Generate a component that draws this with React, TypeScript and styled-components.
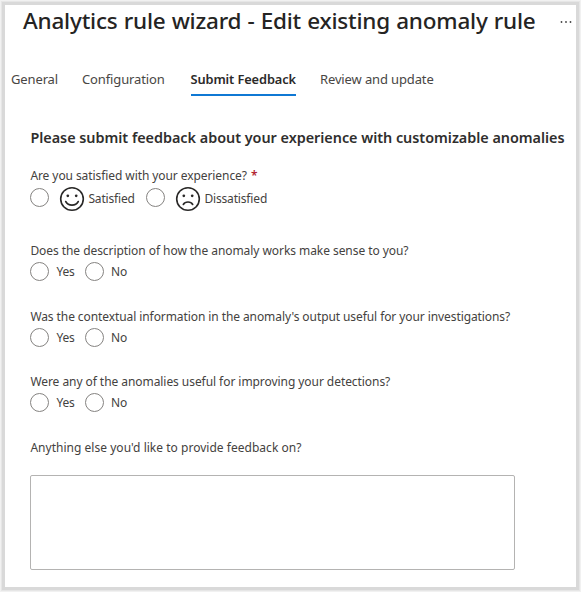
import React from "react";
import styled, { createGlobalStyle } from "styled-components";

const GlobalStyle = createGlobalStyle`
  * { box-sizing: border-box; }
  body { margin: 0; background: #f1f1f1; }
`;

const Frame = styled.main`
  width: 577px;
  height: 588px;
  margin: 2px;
  border: 3px solid #d9d9d9;
  outline: 1px solid #e6e6e6;
  background: #fff;
  color: #444240;
  font: 400 12px/18px "Noto Sans", "Open Sans", sans-serif;
  white-space: nowrap;
  overflow: hidden;
`;

const Header = styled.header`
  display: flex;
  justify-content: space-between;
  height: 32px;
  padding: 0 4px 0 18px;
`;

const Title = styled.h1`
  margin: 0;
  color: #252423;
  font-size: 22.5px;
  font-weight: 500;
  line-height: 32px;
  letter-spacing: -0.2px;
  word-spacing: 0.5px;
`;

const MoreIcon = styled.svg`
  width: 12px;
  height: 4px;
  margin-top: 15px;
  fill: #444;
`;

const Tabs = styled.nav`
  display: flex;
  gap: 25px;
  margin: 29px 0 0 6px;
`;

const Tab = styled.button<{ $active?: boolean; $width: number }>`
  width: ${({ $width }) => $width}px;
  height: 30px;
  padding: 3px 0 4px;
  border: 0;
  border-bottom: 2px solid ${({ $active }) => ($active ? "#0f78d4" : "transparent")};
  background: none;
  color: ${({ $active }) => ($active ? "#2b2a29" : "#484644")};
  font: inherit;
  font-size: ${({ $active }) => ($active ? 12.8 : 13)}px;
  font-weight: ${({ $active }) => ($active ? 600 : 400)};
  line-height: 21px;
  letter-spacing: ${({ $active }) => ($active ? "-0.1px" : "-0.13px")};
  text-align: left;

  &:last-child { margin-left: -1px; }
`;

const Form = styled.form`
  display: flex;
  flex-direction: column;
  padding: 30px 0 0 25.4px;
`;

const Heading = styled.h2`
  margin: 0 0 17px;
  color: #2f2e2d;
  font-size: 14.4px;
  font-weight: 600;
  line-height: 24px;
  letter-spacing: -0.02px;
`;

const Question = styled.section<{ $height: number }>`
  height: ${({ $height }) => $height}px;
`;

const Prompt = styled.div<{ $spacing?: number }>`
  height: 18px;
  letter-spacing: ${({ $spacing = -0.06 }) => $spacing}px;
`;

const Required = styled.span`
  margin-left: 1px;
  color: #b32632;
  font-size: 12px;
  font-weight: 600;
`;

const Options = styled.div<{ $faces?: boolean }>`
  display: flex;
  align-items: center;
  height: ${({ $faces }) => ($faces ? 27 : 23)}px;
`;

const Option = styled.label<{ $width: number }>`
  display: flex;
  align-items: center;
  width: ${({ $width }) => $width}px;
  letter-spacing: -0.16px;
`;

const Radio = styled.input<{ $gap: number; $raised?: boolean }>`
  appearance: none;
  flex: none;
  width: 19px;
  height: 19px;
  margin: 0 ${({ $gap }) => $gap}px ${({ $raised }) => ($raised ? 3 : 1)}px 0;
  border: 1px solid #858381;
  border-radius: 50%;
  background: #fff;
`;

const FaceIcon = styled.svg`
  flex: none;
  width: 26px;
  height: 26px;
  margin-right: 3px;
  fill: none;
  stroke: #292827;
  stroke-width: 1.6;
  stroke-linecap: round;
`;

const Comment = styled.textarea`
  width: 485px;
  height: 95px;
  margin: 0;
  padding: 6px;
  border: 1px solid #b4b3b2;
  border-radius: 2px;
  background: #fff;
  font: inherit;
  resize: none;
`;

function Face({ happy }: { happy?: boolean }) {
  return (
    <FaceIcon viewBox="0 0 26 26" aria-hidden="true">
      <circle cx="13" cy="13" r="11.3" />
      <circle cx="8.8" cy="9.8" r="1.35" fill="#292827" stroke="none" />
      <circle cx="17.2" cy="9.8" r="1.35" fill="#292827" stroke="none" />
      <path d={happy ? "M6.7 15.5C9.4 20.3 16.6 20.3 19.3 15.5" : "M8.3 18.5C10.2 15.2 15.8 15.2 17.7 18.5"} />
    </FaceIcon>
  );
}

function YesNo({ name }: { name: string }) {
  return (
    <Options>
      <Option $width={54.6}><Radio type="radio" name={name} $gap={7} />Yes</Option>
      <Option $width={54}><Radio type="radio" name={name} $gap={7} />No</Option>
    </Options>
  );
}

export default function App() {
  return (
    <>
      <GlobalStyle />
      <Frame>
        <Header>
          <Title>Analytics rule wizard - Edit existing anomaly rule</Title>
          <MoreIcon viewBox="0 0 12 4" aria-label="More">
            <circle cx="1.5" cy="2" r=".9" />
            <circle cx="6" cy="2" r=".9" />
            <circle cx="10.5" cy="2" r=".9" />
          </MoreIcon>
        </Header>
        <Tabs>
          <Tab $width={46}>General</Tab>
          <Tab $width={83.5}>Configuration</Tab>
          <Tab $active $width={105.5}>Submit Feedback</Tab>
          <Tab $width={115}>Review and update</Tab>
        </Tabs>
        <Form>
          <Heading>Please submit feedback about your experience with customizable anomalies</Heading>
          <Question $height={75}>
            <Prompt $spacing={-0.08}>
              Are you satisfied with your experience? <Required>*</Required>
            </Prompt>
            <Options $faces>
              <Option $width={116}><Radio type="radio" name="satisfaction" $gap={10} $raised /><Face happy />Satisfied</Option>
              <Option $width={122}><Radio type="radio" name="satisfaction" $gap={10} $raised /><Face />Dissatisfied</Option>
            </Options>
          </Question>
          <Question $height={66}>
            <Prompt>Does the description of how the anomaly works make sense to you?</Prompt>
            <YesNo name="description" />
          </Question>
          <Question $height={65}>
            <Prompt $spacing={-0.085}>Was the contextual information in the anomaly's output useful for your investigations?</Prompt>
            <YesNo name="context" />
          </Question>
          <Question $height={66}>
            <Prompt>Were any of the anomalies useful for improving your detections?</Prompt>
            <YesNo name="detections" />
          </Question>
          <Question $height={36}>
            <Prompt $spacing={0.025}>Anything else you'd like to provide feedback on?</Prompt>
          </Question>
          <Comment aria-label="Additional feedback" />
        </Form>
      </Frame>
    </>
  );
}
